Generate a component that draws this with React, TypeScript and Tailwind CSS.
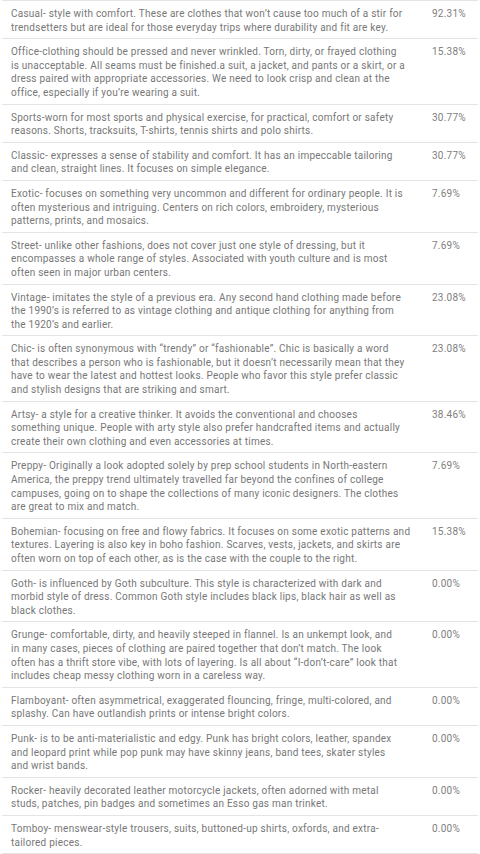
import React from "react";

type Style = { text: string; pct: string };

const styles: Style[] = [
  {
    text: "Casual- style with comfort. These are clothes that won’t cause too much of a stir for\ntrendsetters but are ideal for those everyday trips where durability and fit are key.",
    pct: "92.31%",
  },
  {
    text: "Office-clothing should be pressed and never wrinkled. Torn, dirty, or frayed clothing\nis unacceptable. All seams must be finished.a suit, a jacket, and pants or a skirt, or a\ndress paired with appropriate accessories. We need to look crisp and clean at the\noffice, especially if you’re wearing a suit.",
    pct: "15.38%",
  },
  {
    text: "Sports-worn for most sports and physical exercise, for practical, comfort or safety\nreasons. Shorts, tracksuits, T-shirts, tennis shirts and polo shirts.",
    pct: "30.77%",
  },
  {
    text: "Classic- expresses a sense of stability and comfort. It has an impeccable tailoring\nand clean, straight lines. It focuses on simple elegance.",
    pct: "30.77%",
  },
  {
    text: "Exotic- focuses on something very uncommon and different for ordinary people. It is\noften mysterious and intriguing. Centers on rich colors, embroidery, mysterious\npatterns, prints, and mosaics.",
    pct: "7.69%",
  },
  {
    text: "Street- unlike other fashions, does not cover just one style of dressing, but it\nencompasses a whole range of styles. Associated with youth culture and is most\noften seen in major urban centers.",
    pct: "7.69%",
  },
  {
    text: "Vintage- imitates the style of a previous era. Any second hand clothing made before\nthe 1990’s is referred to as vintage clothing and antique clothing for anything from\nthe 1920’s and earlier.",
    pct: "23.08%",
  },
  {
    text: "Chic- is often synonymous with “trendy” or “fashionable”. Chic is basically a word\nthat describes a person who is fashionable, but it doesn’t necessarily mean that they\nhave to wear the latest and hottest looks. People who favor this style prefer classic\nand stylish designs that are striking and smart.",
    pct: "23.08%",
  },
  {
    text: "Artsy- a style for a creative thinker. It avoids the conventional and chooses\nsomething unique. People with arty style also prefer handcrafted items and actually\ncreate their own clothing and even accessories at times.",
    pct: "38.46%",
  },
  {
    text: "Preppy- Originally a look adopted solely by prep school students in North-eastern\nAmerica, the preppy trend ultimately travelled far beyond the confines of college\ncampuses, going on to shape the collections of many iconic designers. The clothes\nare great to mix and match.",
    pct: "7.69%",
  },
  {
    text: "Bohemian- focusing on free and flowy fabrics. It focuses on some exotic patterns and\ntextures. Layering is also key in boho fashion. Scarves, vests, jackets, and skirts are\noften worn on top of each other, as is the case with the couple to the right.",
    pct: "15.38%",
  },
  {
    text: "Goth- is influenced by Goth subculture. This style is characterized with dark and\nmorbid style of dress. Common Goth style includes black lips, black hair as well as\nblack clothes.",
    pct: "0.00%",
  },
  {
    text: "Grunge- comfortable, dirty, and heavily steeped in flannel. Is an unkempt look, and\nin many cases, pieces of clothing are paired together that don’t match. The look\noften has a thrift store vibe, with lots of layering. Is all about “I-don’t-care” look that\nincludes cheap messy clothing worn in a careless way.",
    pct: "0.00%",
  },
  {
    text: "Flamboyant- often asymmetrical, exaggerated flouncing, fringe, multi-colored, and\nsplashy. Can have outlandish prints or intense bright colors.",
    pct: "0.00%",
  },
  {
    text: "Punk- is to be anti-materialistic and edgy. Punk has bright colors, leather, spandex\nand leopard print while pop punk may have skinny jeans, band tees, skater styles\nand wrist bands.",
    pct: "0.00%",
  },
  {
    text: "Rocker- heavily decorated leather motorcycle jackets, often adorned with metal\nstuds, patches, pin badges and sometimes an Esso gas man trinket.",
    pct: "0.00%",
  },
  {
    text: "Tomboy- menswear-style trousers, suits, buttoned-up shirts, oxfords, and extra-\ntailored pieces.",
    pct: "0.00%",
  },
];

export default function App() {
  return (
    <div className="min-h-screen bg-white px-[2px] font-['Roboto',_'Liberation_Sans',_sans-serif] text-[10px] leading-[13.6px] tracking-[0.24px] text-[#777777]">
      <div className="border-t border-[#e4e4e4]">
        {styles.map((s) => (
          <div key={s.pct + s.text.slice(0, 12)} className="flex border-b border-[#e4e4e4] pt-[6px] pb-[4px]">
            <p className="w-[430px] shrink-0 whitespace-pre-line pl-[9px] pr-[12px]">{s.text}</p>
            <span className="flex-1 text-[#808080]">{s.pct}</span>
          </div>
        ))}
      </div>
    </div>
  );
}
